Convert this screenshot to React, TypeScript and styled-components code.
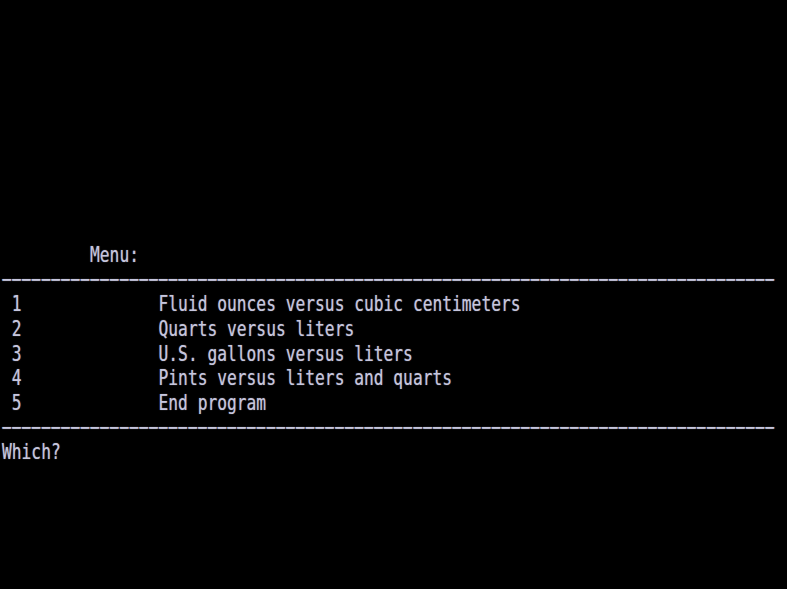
import React from "react";
import styled, { createGlobalStyle } from "styled-components";

const Global = createGlobalStyle`
  html, body {
    margin: 0;
    padding: 0;
    background: #000;
    height: 100%;
  }
  #root {
    min-height: 100%;
  }
`;

const Screen = styled.div`
  width: 787px;
  height: 589px;
  box-sizing: border-box;
  background: #000;
  padding: 243px 0 0 2px;
  overflow: hidden;
  font-family: "DejaVu Sans Mono", "Liberation Mono", monospace;
  font-size: 16.25px;
  color: #c6c6de;
  display: flex;
  flex-direction: column;
`;

const Line = styled.div`
  height: 24.67px;
  line-height: 24.67px;
  white-space: pre;
`;

const Glyphs = styled.span`
  display: inline-block;
  line-height: 17px;
  transform: scaleY(1.3);
  transform-origin: center;
  text-shadow: 0 0 1px rgba(198, 198, 222, 0.6);
`;

const Dashes = styled.span`
  font-weight: bold;
  text-shadow: 0 0 1px rgba(198, 198, 222, 0.7);
`;

const items = [
  "Fluid ounces versus cubic centimeters",
  "Quarts versus liters",
  "U.S. gallons versus liters",
  "Pints versus liters and quarts",
  "End program",
];

const dashes = "−".repeat(79);

const Text = ({ children }: { children: React.ReactNode }) => (
  <Line>
    <Glyphs>{children}</Glyphs>
  </Line>
);

const Rule = () => (
  <Line>
    <Dashes>{dashes}</Dashes>
  </Line>
);

export default function App() {
  return (
    <>
      <Global />
      <Screen>
        <Text>{"         Menu:"}</Text>
        <Rule />
        {items.map((t, i) => (
          <Text key={i}>{` ${i + 1}              ${t}`}</Text>
        ))}
        <Rule />
        <Text>Which?</Text>
      </Screen>
    </>
  );
}
